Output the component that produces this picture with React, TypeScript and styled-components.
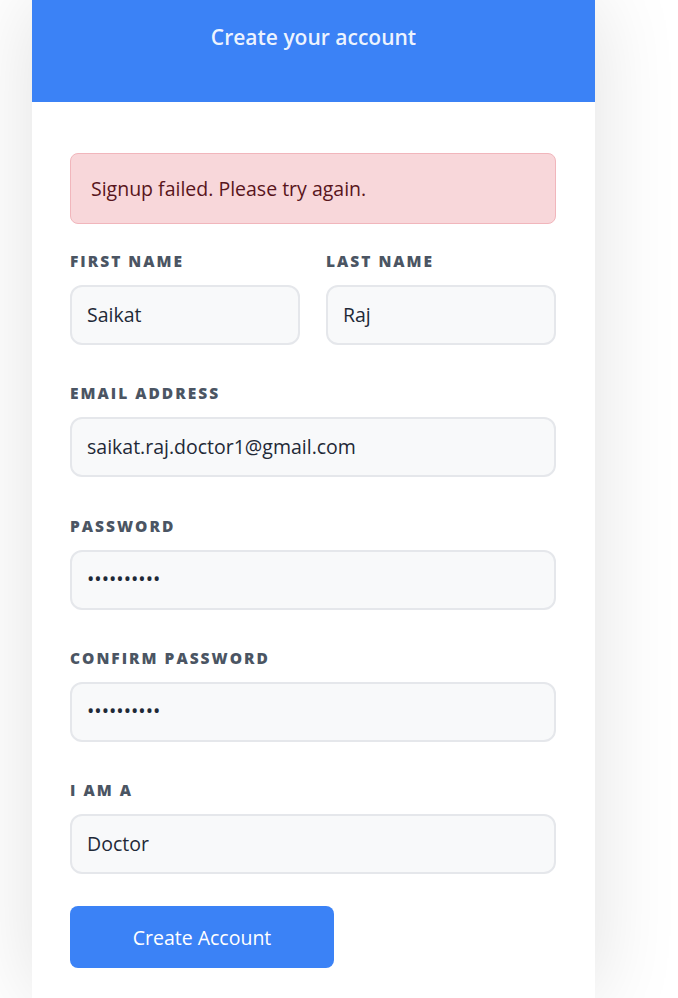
import React from "react";
import styled, { createGlobalStyle } from "styled-components";

const GlobalStyle = createGlobalStyle`
  html, body {
    margin: 0;
    padding: 0;
    background: #ffffff;
    font-family: "Open Sans", "Noto Sans", sans-serif;
  }
  * { box-sizing: border-box; }
`;

const Page = styled.div`
  padding-left: 32px;
  background: #ffffff;
`;

const Card = styled.div`
  width: 563px;
  background: #ffffff;
  box-shadow: 0 0 80px rgba(0, 0, 0, 0.12);
`;

const Header = styled.header`
  height: 102px;
  background: #3b82f6;
  padding-top: 23px;
  text-align: center;
`;

const Title = styled.h1`
  margin: 0;
  font-size: 21px;
  line-height: 28px;
  font-weight: 600;
  color: rgba(255, 255, 255, 0.92);
`;

const Body = styled.div`
  padding: 51px 39px 30px 38px;
`;

const Alert = styled.div`
  background: #f8d7da;
  border: 1px solid #f1b6bc;
  border-radius: 8px;
  padding: 22px 19px 22px 20px;
  font-size: 19.5px;
  line-height: 25px;
  color: #58151c;
  margin-bottom: 27px;
`;

const Form = styled.form`
  display: flex;
  flex-direction: column;
  gap: 38.25px;
`;

const Row = styled.div`
  display: grid;
  grid-template-columns: 1fr 1fr;
  gap: 26px;
`;

const Field = styled.div`
  display: flex;
  flex-direction: column;
`;

const Label = styled.label`
  display: block;
  font-family: "Open Sans", "Noto Sans", sans-serif;
  font-size: 15.5px;
  line-height: 20px;
  font-weight: 800;
  letter-spacing: 2px;
  text-transform: uppercase;
  color: #4b5563;
  margin-bottom: 14px;
`;

const fieldStyles = `
  width: 100%;
  height: 60px;
  border: 2px solid #e5e7eb;
  border-radius: 12px;
  background: #f8f9fa;
  padding: 0 14px 2px 15px;
  font-family: "Open Sans", "Noto Sans", sans-serif;
  font-size: 19.5px;
  color: #1f2937;
  outline: none;
`;

const Input = styled.input`
  ${fieldStyles}
`;

const Select = styled.select`
  ${fieldStyles}
  appearance: none;
  -webkit-appearance: none;
`;

const SubmitButton = styled.button`
  width: 264px;
  height: 62px;
  margin-top: -6px;
  border: none;
  border-radius: 8px;
  background: #3b82f6;
  color: #ffffff;
  font-family: "Open Sans", "Noto Sans", sans-serif;
  font-size: 19.5px;
  font-weight: 500;
  cursor: pointer;
`;

export default function App() {
  return (
    <>
      <GlobalStyle />
      <Page>
        <Card>
          <Header>
            <Title>Create your account</Title>
          </Header>
          <Body>
            <Alert>Signup failed. Please try again.</Alert>
            <Form onSubmit={(e) => e.preventDefault()}>
              <Row>
                <Field>
                  <Label htmlFor="first">First Name</Label>
                  <Input id="first" type="text" defaultValue="Saikat" />
                </Field>
                <Field>
                  <Label htmlFor="last">Last Name</Label>
                  <Input id="last" type="text" defaultValue="Raj" />
                </Field>
              </Row>
              <Field>
                <Label htmlFor="email">Email Address</Label>
                <Input id="email" type="email" defaultValue="saikat.raj.doctor1@gmail.com" />
              </Field>
              <Field>
                <Label htmlFor="pw">Password</Label>
                <Input id="pw" type="password" defaultValue="doctor1234" />
              </Field>
              <Field>
                <Label htmlFor="pw2">Confirm Password</Label>
                <Input id="pw2" type="password" defaultValue="doctor1234" />
              </Field>
              <Field>
                <Label htmlFor="role">I am a</Label>
                <Select id="role" defaultValue="doctor">
                  <option value="patient">Patient</option>
                  <option value="doctor">Doctor</option>
                </Select>
              </Field>
              <div>
                <SubmitButton type="submit">Create Account</SubmitButton>
              </div>
            </Form>
          </Body>
        </Card>
      </Page>
    </>
  );
}
